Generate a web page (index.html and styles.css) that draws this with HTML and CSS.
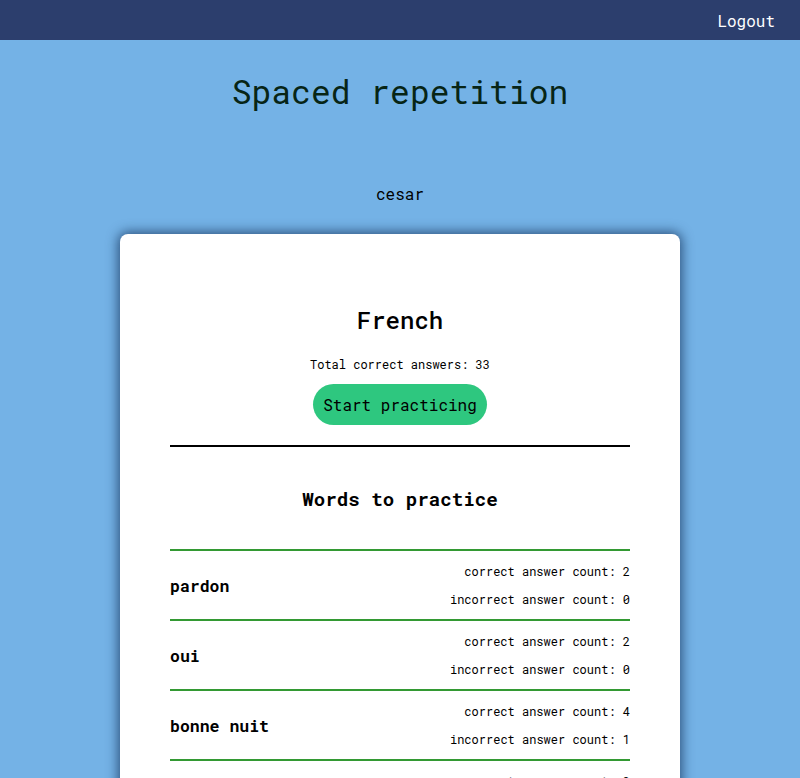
FILE: index.html
```html
<!DOCTYPE html>
<html>
<head>
<meta charset="utf-8">
<link rel="stylesheet" href="styles.css">
</head>
<body>
<header class="topbar">
  <a class="logout">Logout</a>
</header>
<main class="page">
  <h1 class="title">Spaced repetition</h1>
  <p class="user">cesar</p>
  <section class="card">
    <h2 class="lang">French</h2>
    <p class="total">Total correct answers: 33</p>
    <button class="start">Start practicing</button>
    <hr class="divider">
    <h3 class="words-title">Words to practice</h3>
    <ul class="words">
      <li class="word">
        <span class="word-name">pardon</span>
        <div class="counts"><span>correct answer count: 2</span><span>incorrect answer count: 0</span></div>
      </li>
      <li class="word">
        <span class="word-name">oui</span>
        <div class="counts"><span>correct answer count: 2</span><span>incorrect answer count: 0</span></div>
      </li>
      <li class="word">
        <span class="word-name">bonne nuit</span>
        <div class="counts"><span>correct answer count: 4</span><span>incorrect answer count: 1</span></div>
      </li>
      <li class="word">
        <span class="word-name">merci</span>
        <div class="counts"><span>correct answer count: 3</span><span>incorrect answer count: 0</span></div>
      </li>
    </ul>
  </section>
</main>
</body>
</html>
```
FILE: styles.css
```css
* { box-sizing: border-box; }
html, body { margin: 0; padding: 0; }
body {
  background: #74b2e6;
  font-family: "Roboto Mono", "DejaVu Sans Mono", "Liberation Mono", monospace;
  color: #000;
  height: 778px;
  overflow: hidden;
}
.topbar {
  height: 40px;
  background: #2c3e6d;
  display: flex;
  align-items: center;
  justify-content: flex-end;
  padding-right: 25px;
}
.logout {
  color: #fff;
  font-size: 16px;
}
.page {
  display: flex;
  flex-direction: column;
  align-items: center;
}
.title {
  margin: 32px 0 0;
  font-size: 33px;
  font-weight: 400;
  color: #072516;
  line-height: 38px;
}
.user {
  margin: 74px 0 0;
  font-size: 16px;
  line-height: 20px;
}
.card {
  margin-top: 30px;
  width: 560px;
  background: #fff;
  border-radius: 8px;
  box-shadow: 0 0 12px 2px rgba(20, 50, 90, 0.75);
  padding: 71px 50px 0;
  display: flex;
  flex-direction: column;
  align-items: center;
}
.lang {
  margin: 0;
  font-size: 24px;
  font-weight: 500;
  line-height: 30px;
}
.total {
  margin: 21px 0 0;
  font-size: 12px;
  line-height: 16px;
}
.start {
  margin-top: 12px;
  background: #2ec77f;
  border: none;
  border-radius: 21px;
  height: 41px;
  padding: 0 10px;
  font-family: inherit;
  font-size: 16px;
  color: #000;
}
.divider {
  width: 100%;
  margin: 20px 0 0;
  border: none;
  border-top: 2px solid #000;
}
.words-title {
  margin: 40px 0 0;
  font-size: 19.2px;
  font-weight: 700;
  line-height: 24px;
}
.words {
  list-style: none;
  margin: 38px 0 0;
  padding: 0;
  width: 100%;
}
.word {
  border-top: 2px solid #339933;
  height: 70px;
  display: flex;
  align-items: center;
  justify-content: space-between;
}
.word-name {
  font-size: 16.5px;
  font-weight: 700;
}
.counts {
  display: flex;
  flex-direction: column;
  align-items: flex-end;
  gap: 12px;
  padding-bottom: 1px;
  font-size: 12px;
  line-height: 16px;
}
```
